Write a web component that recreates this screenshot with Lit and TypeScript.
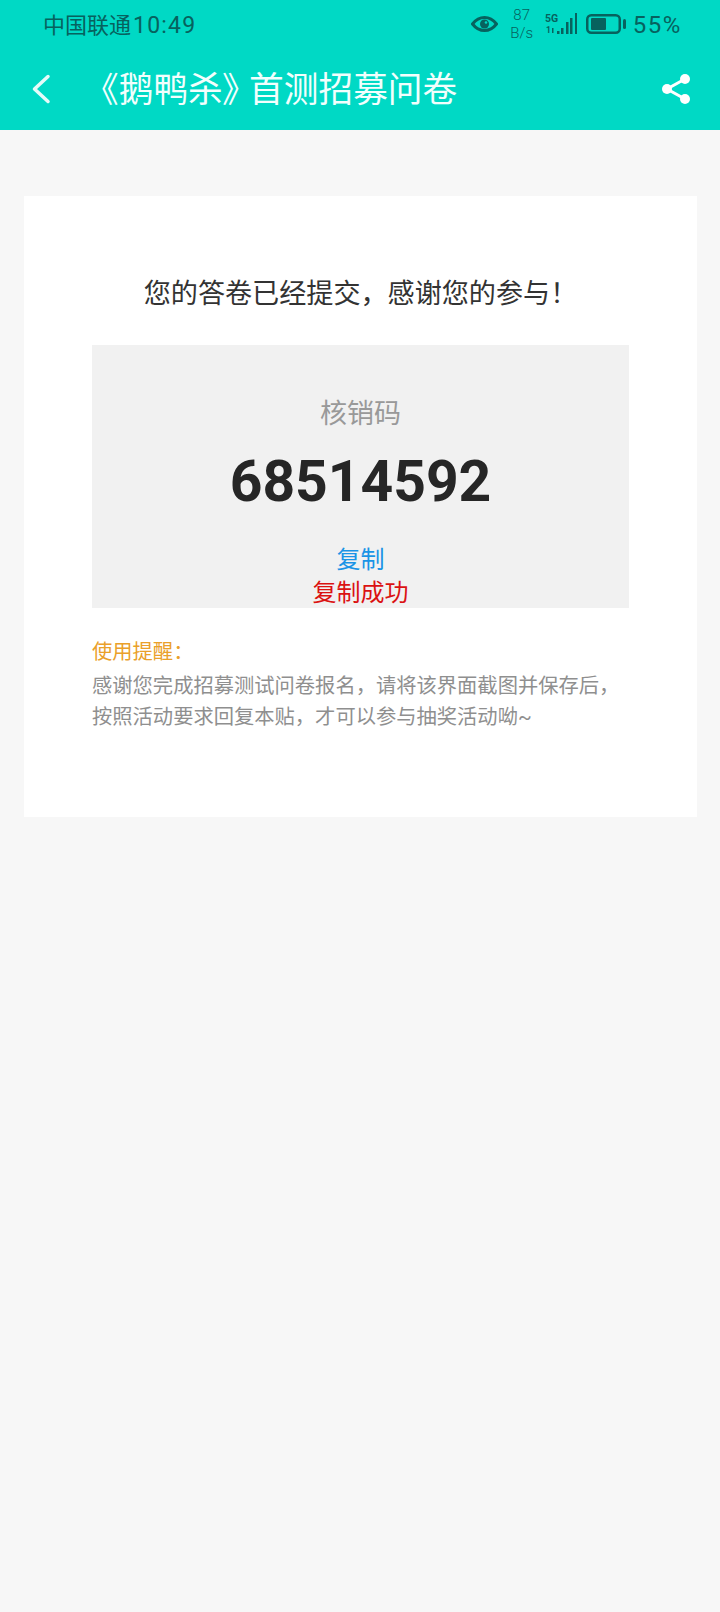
import { LitElement, html, css } from "lit";
import { customElement } from "lit/decorators.js";

@customElement("app-root")
export class AppRoot extends LitElement {
  static styles = css`
    :host {
      display: block;
      min-height: 1612px;
      background: #f7f7f7;
      font-family: Roboto, "Noto Sans CJK SC", sans-serif;
    }

    .top {
      background: #00d9c5;
      height: 130px;
      display: flex;
      flex-direction: column;
    }

    .status {
      height: 50px;
      padding: 0 38px 0 43px;
      display: flex;
      align-items: center;
      justify-content: space-between;
      color: #07625e;
    }

    .status-left {
      display: flex;
      align-items: center;
      gap: 2px;
    }

    .carrier {
      padding-bottom: 5px;
      font-size: 22px;
    }

    .time {
      font-size: 23px;
      letter-spacing: 1.2px;
    }

    .status-right {
      display: flex;
      align-items: center;
    }

    .eye {
      margin-bottom: 2px;
    }

    .speed {
      width: 30px;
      margin: 0 8px 2px 9px;
      font-size: 15px;
      font-weight: 300;
      line-height: 18px;
      text-align: center;
    }

    .battery {
      margin: 0 0 2px 9px;
    }

    .percent {
      margin-left: 7px;
      font-size: 24px;
      letter-spacing: 1.6px;
    }

    .bar {
      flex: 1;
      display: flex;
      align-items: center;
      padding: 0 29px 0 31px;
      color: #fff;
    }

    .back {
      margin-bottom: 2px;
    }

    .share {
      margin-bottom: 3px;
    }

    .title {
      flex: 1;
      margin-left: 33px;
      padding-bottom: 6px;
      font-size: 34.7px;
      white-space: nowrap;
      color: #f2fffd;
    }

    .quote {
      font-feature-settings: "palt";
      margin-right: 9px;
    }

    .card {
      margin: 66px 23px 0 24px;
      height: 621px;
      box-sizing: border-box;
      padding: 77px 68px 0;
      background: #fff;
    }

    .heading {
      margin: 0;
      font-size: 27.1px;
      font-weight: 400;
      line-height: 42px;
      text-align: center;
      color: #333;
    }

    .code-box {
      margin-top: 30px;
      height: 263px;
      box-sizing: border-box;
      padding-top: 49px;
      background: #f1f1f1;
      text-align: center;
    }

    .code-label {
      font-size: 27px;
      line-height: 40px;
      color: #999;
    }

    .code {
      margin-top: 14px;
      font-size: 57px;
      font-weight: 700;
      line-height: 68px;
      color: #262626;
    }

    .copy,
    .copied {
      font-size: 24px;
      line-height: 33px;
    }

    .copy {
      margin-top: 28px;
      color: #1a94e6;
    }

    .copied {
      color: #db1212;
    }

    .tip-title {
      margin-top: 27px;
      font-size: 20.3px;
      line-height: 35px;
      color: #eaa02a;
    }

    .tip {
      margin-top: 1px;
      font-size: 20.3px;
      line-height: 31px;
      color: #8f8f8f;
    }
  `;

  render() {
    return html`
      <div class="top">
        <div class="status">
          <div class="status-left">
            <span class="carrier">中国联通</span>
            <span class="time">10:49</span>
          </div>
          <div class="status-right">
            <svg class="eye" width="27" height="16" viewBox="0 0 27 16">
              <path
                d="M1.500 8C5 3.500 9 1.500 13.500 1.500S22 3.500 25.500 8C22 12.500 18 14.500 13.500 14.500S5 12.500 1.500 8Z"
                fill="none"
                stroke="currentColor"
                stroke-width="3"
              />
              <circle cx="13.500" cy="8" r="4.500" fill="currentColor" />
              <circle cx="15" cy="6.500" r="1.300" fill="#00d9c5" />
            </svg>
            <div class="speed">87<br />B/s</div>
            <svg width="32" height="24" viewBox="0 0 32 24" fill="currentColor">
              <text x="0" y="9" font-size="10.500" font-weight="700">5G</text>
              <text x="1" y="20" font-size="8.500" font-weight="700">1</text>
              <rect x="7" y="15" width="1.500" height="5" />
              <rect x="12" y="18" width="2.500" height="3" />
              <rect x="16" y="15" width="2.500" height="6" />
              <rect x="21" y="9" width="2.500" height="12" />
              <rect x="25" y="5" width="2.500" height="16" />
              <rect x="30" y="0" width="2" height="21" />
            </svg>
            <svg class="battery" width="40" height="20" viewBox="0 0 40 20">
              <rect
                x="1.250"
                y="1.250"
                width="32.500"
                height="17.500"
                rx="4"
                fill="none"
                stroke="currentColor"
                stroke-width="2.500"
              />
              <rect x="5" y="4" width="15" height="12" rx="1" fill="currentColor" />
              <rect
                x="37"
                y="5"
                width="3"
                height="10"
                rx="1.500"
                fill="currentColor"
              />
            </svg>
            <span class="percent">55%</span>
          </div>
        </div>
        <div class="bar">
          <svg class="back" width="20" height="30" viewBox="0 0 20 30">
            <path
              d="M17 2.500 3.500 15 17 27.500"
              fill="none"
              stroke="#e6fbf9"
              stroke-width="3.500"
              stroke-linecap="round"
              stroke-linejoin="round"
            />
          </svg>
          <div class="title">《鹅鸭杀<span class="quote">》</span>首测招募问卷</div>
          <svg class="share" width="30" height="32" viewBox="0 0 30 32">
            <path
              d="M24 6 6 16 24 26"
              fill="none"
              stroke="#fff"
              stroke-width="3"
            />
            <circle cx="24" cy="6" r="5" fill="#fff" />
            <circle cx="6" cy="16" r="5" fill="#fff" />
            <circle cx="24" cy="26" r="5" fill="#fff" />
          </svg>
        </div>
      </div>
      <div class="card">
        <h1 class="heading">您的答卷已经提交，感谢您的参与！</h1>
        <div class="code-box">
          <div class="code-label">核销码</div>
          <div class="code">68514592</div>
          <div class="copy">复制</div>
          <div class="copied">复制成功</div>
        </div>
        <div class="tip-title">使用提醒：</div>
        <div class="tip">
          感谢您完成招募测试问卷报名，请将该界面截图并保存后，<br />
          按照活动要求回复本贴，才可以参与抽奖活动呦~
        </div>
      </div>
    `;
  }
}
